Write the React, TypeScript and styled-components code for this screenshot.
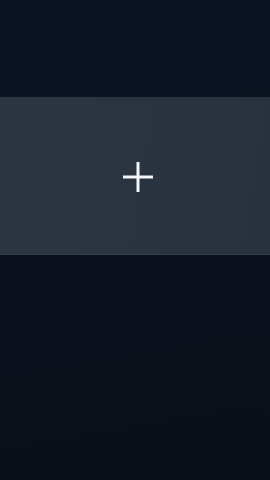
import React from 'react';
import styled, { createGlobalStyle } from 'styled-components';

const GlobalStyle = createGlobalStyle`
	html, body, #root {
		margin: 0;
		padding: 0;
		height: 100%;
	}
	body {
		background: #0a111c;
		font-family: 'Inter', 'Liberation Sans', sans-serif;
	}
`;

const PlusIcon = () => (
	<svg width="32" height="32" viewBox="0 0 32 32" fill="none">
		<path d="M16 1v30M1 16h30" stroke="#f4f6f8" strokeWidth="3" strokeLinecap="butt" />
	</svg>
);

const App = () => {
	return (
		<>
			<GlobalStyle />
			<Screen>
				<AddTile type="button" aria-label="Add">
					<IconWrap>
						<PlusIcon />
					</IconWrap>
				</AddTile>
			</Screen>
		</>
	);
};

export default App;

// styles
const Screen = styled.div`
	display: flex;
	flex-direction: column;
	width: 100%;
	height: 100%;
	min-height: 480px;
	padding-top: 97px;
	box-sizing: border-box;
	background: linear-gradient(170deg, #0b1223 0%, #0a111d 50%, #0a1019 100%);
`;

const AddTile = styled.button`
	display: flex;
	align-items: center;
	justify-content: center;
	height: 158px;
	width: 100%;
	padding: 2px 0 0 5px;
	border: none;
	border-bottom: 1px solid #333c49;
	background: linear-gradient(100deg, #2d3543 0%, #2a3340 60%, #28313e 100%);
	cursor: pointer;
`;

const IconWrap = styled.span`
	display: flex;
	line-height: 0;
`;
